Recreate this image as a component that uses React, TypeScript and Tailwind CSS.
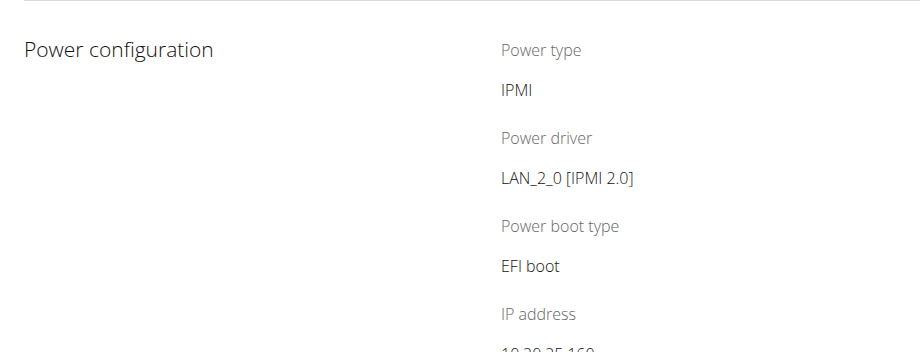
import React from "react";

const items: [string, string][] = [
  ["Power type", "IPMI"],
  ["Power driver", "LAN_2_0 [IPMI 2.0]"],
  ["Power boot type", "EFI boot"],
  ["IP address", "10.20.25.160"],
];

export default function App() {
  return (
    <div
      className="w-[920px] h-[352px] overflow-hidden bg-white"
      style={{ fontFamily: '"Open Sans", "Noto Sans", sans-serif' }}
    >
      <div className="ml-6 border-t border-[#d9d9d9] flex">
        <div className="w-[477px] pt-[36px]">
          <h4 className="text-[21px] leading-[24px] font-light text-[#111]">Power configuration</h4>
        </div>
        <div className="flex flex-col pt-[37px]">
          {items.map(([label, value]) => (
            <div key={label} className="flex flex-col gap-4 mb-6">
              <p className="text-[16px] leading-[24px] font-light text-[#666]">{label}</p>
              <p className="text-[16px] leading-[24px] font-light text-[#111]">{value}</p>
            </div>
          ))}
        </div>
      </div>
    </div>
  );
}
